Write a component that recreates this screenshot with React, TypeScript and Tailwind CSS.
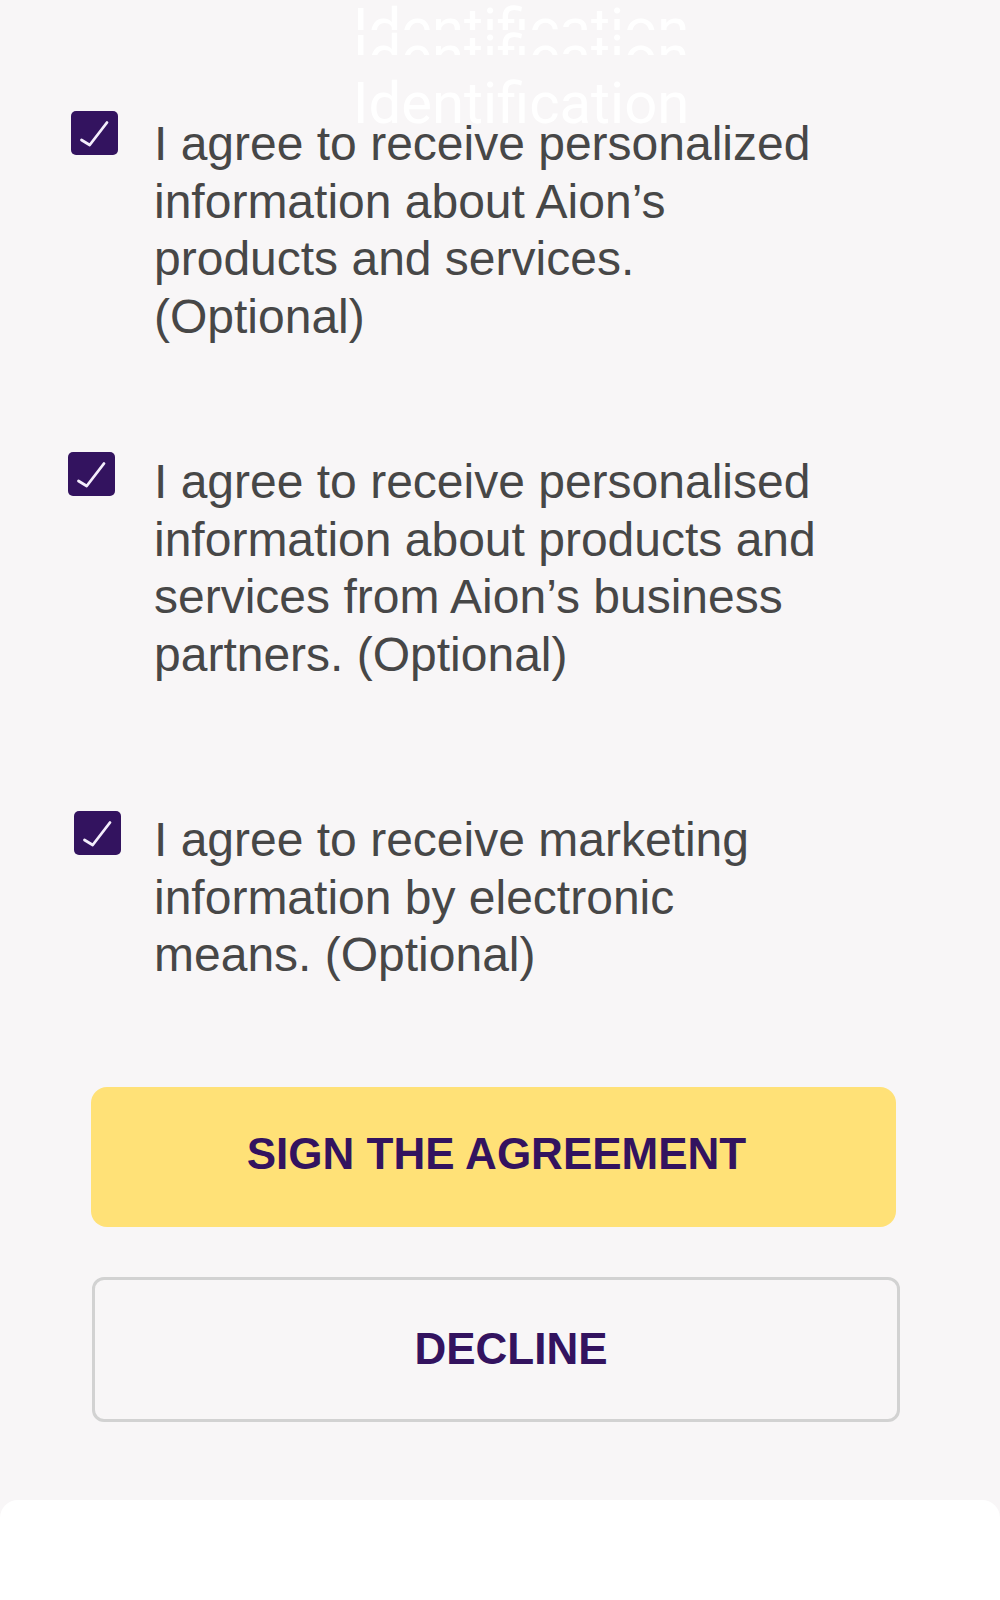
import React from 'react'

const ROWS = [
  {
    text: 'I agree to receive personalized information about Aion’s products and services. (Optional)',
    boxLeft: 'ml-[71px]',
    boxTop: 'mt-0',
    textTop: 'mt-[4px]',
    rowTop: 'mt-0',
  },
  {
    text: 'I agree to receive personalised information about products and services from Aion’s business partners. (Optional)',
    boxLeft: 'ml-[68px]',
    boxTop: 'mt-0',
    textTop: 'mt-[1px]',
    rowTop: 'mt-[107px]',
  },
  {
    text: 'I agree to receive marketing information by electronic means. (Optional)',
    boxLeft: 'ml-[74px]',
    boxTop: 'mt-0',
    textTop: 'mt-0',
    rowTop: 'mt-[128px]',
  },
]

function CheckBox({ className }: { className: string }) {
  return (
    <div className={`w-[47px] h-[44px] shrink-0 rounded-[5px] bg-[#33135f] flex items-center justify-center ${className}`}>
      <svg width="47" height="44" viewBox="0 0 47 44" fill="none">
        <polyline
          points="10.5,29 18.7,34 36,11.5"
          stroke="#f4eefc"
          strokeWidth="2.8"
          strokeLinecap="round"
          strokeLinejoin="round"
        />
      </svg>
    </div>
  )
}

export default function App() {
  return (
    <div className="w-[1000px] h-[1600px] bg-[#f8f6f7] flex flex-col font-['Liberation_Sans',Arial,sans-serif]">
      {/* Stacked page titles */}
      <div className="h-[111px] flex flex-col items-center text-white font-['Roboto',sans-serif] text-[58px] leading-[58px] pl-[42px]">
        <div className="h-[30px] overflow-hidden">
          <div>Identification</div>
        </div>
        <div className="h-[25px] overflow-hidden">
          <div className="-mt-[3px]">Identification</div>
        </div>
        <div className="h-[56px]">
          <div className="mt-[19px]">Identification</div>
        </div>
      </div>

      {/* Consent rows */}
      {ROWS.map((row) => (
        <div key={row.text} className={`flex ${row.rowTop}`}>
          <div className="w-[154px] shrink-0 flex items-start">
            <CheckBox className={`${row.boxLeft} ${row.boxTop}`} />
          </div>
          <p className={`w-[680px] text-[48px] leading-[57.5px] text-[#474747] ${row.textTop}`}>{row.text}</p>
        </div>
      ))}

      {/* Actions */}
      <button className="mt-[103px] ml-[91px] w-[805px] h-[140px] shrink-0 rounded-[16px] bg-[#ffe177] text-[#33135f] text-[44px] font-bold pl-[6px] pb-[6px]">
        SIGN THE AGREEMENT
      </button>
      <button className="mt-[50px] ml-[92px] w-[808px] h-[145px] shrink-0 rounded-[12px] border-[3px] border-[#d2d2d2] text-[#33135f] text-[44px] font-bold pl-[30px]">
        DECLINE
      </button>

      <div className="mt-auto h-[100px] bg-white rounded-t-[18px]" />
    </div>
  )
}
